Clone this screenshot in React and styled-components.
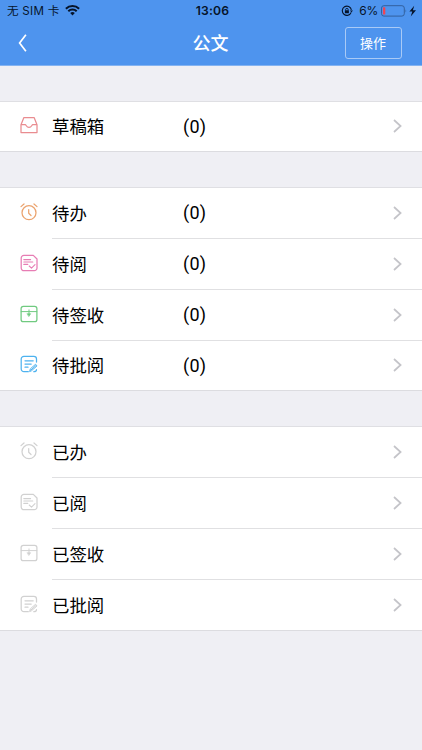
import React from "react";
import styled, { createGlobalStyle } from "styled-components";

const GlobalStyle = createGlobalStyle`
  * { box-sizing: border-box; }
  body {
    margin: 0;
    background: #efeff4;
    font-family: Inter, "Noto Sans CJK SC", sans-serif;
    color: #000;
  }
`;

const Screen = styled.div`
  height: 750px;
  overflow: hidden;
  background: #efeff4;
`;

const Header = styled.header`
  height: 66px;
  background: #4e94ee;
  border-bottom: 1px solid #84b3f1;
`;

const StatusBar = styled.div`
  display: grid;
  grid-template-columns: 1fr auto 1fr;
  height: 21px;
  align-items: center;
  padding: 1px 4px 0 7px;
  font-size: 11.6px;
  line-height: 20px;
  color: #06142a;
`;

const StatusSide = styled.div`
  display: flex;
  align-items: center;
  justify-content: ${(p) => (p.$end ? "flex-end" : "flex-start")};
  white-space: pre;
  svg { display: block; flex: none; }
`;

const Carrier = styled.span`
  margin-right: 6px;
  letter-spacing: 0.25px;
`;

const Clock = styled.span`
  font-size: 12.2px;
  font-weight: 600;
  letter-spacing: 0.15px;
`;

const Percent = styled.span`
  margin: 0 3px 0 6px;
  font-size: 12px;
  letter-spacing: -0.2px;
`;

const NavBar = styled.div`
  display: grid;
  grid-template-columns: 1fr auto 1fr;
  align-items: center;
  height: 44px;
  padding: 0 20px 0 18px;
  color: #fff;
`;

const BackButton = styled.button`
  justify-self: start;
  width: 12px;
  height: 20px;
  padding: 0;
  border: 0;
  background: none;
  color: inherit;
  svg { display: block; }
`;

const Title = styled.h1`
  margin: 0;
  padding: 0 0 2px 1px;
  font: 500 18px/26px "Noto Sans CJK SC", sans-serif;
`;

const ActionButton = styled.button`
  justify-self: end;
  width: 57px;
  height: 32px;
  padding: 0 1px 0 0;
  border: 1px solid #a9caf6;
  border-radius: 3px;
  background: none;
  color: #fff;
  font: 13px/28px "Noto Sans CJK SC", sans-serif;
`;

const Group = styled.section`
  margin-top: ${(p) => p.$gap}px;
  background: #fff;
  border-top: 1px solid #dfdfe3;
`;

const Row = styled.div`
  display: flex;
  align-items: center;
  height: ${(p) => p.$height || 51}px;
  padding-left: 20px;
  border-bottom: ${(p) => (p.$last ? "1px solid #dcdce0" : "0")};
`;

const IconSlot = styled.div`
  flex: none;
  width: 32px;
  padding-bottom: 3px;
  color: ${(p) => p.$color};
  svg { display: block; }
`;

const RowBody = styled.div`
  display: flex;
  flex: 1;
  align-items: center;
  height: 100%;
  padding-right: 20px;
  border-bottom: ${(p) => (p.$last ? "0" : "1px solid #e0e0e2")};
`;

const Label = styled.span`
  width: 131px;
  padding-bottom: 1px;
  font: 17.4px/26px "Noto Sans CJK SC", sans-serif;
`;

const Count = styled.span`
  font: 18px/26px Roboto, sans-serif;
  letter-spacing: 0.2px;
`;

const Chevron = styled.svg`
  display: block;
  margin: 0 0 1px auto;
`;

const Icon = ({ children }) => (
  <svg width="18" height="18" viewBox="0 0 18 18" fill="none" stroke="currentColor" strokeWidth="1.25" strokeLinecap="round" strokeLinejoin="round">
    {children}
  </svg>
);

const icons = {
  inbox: (
    <Icon>
      <path d="M1 8.7 3.9 1.5h10.2L17 8.7v7.8H1ZM1 8.7h4.3c.8 0 1.1 2.7 3.7 2.7s2.9-2.7 3.7-2.7H17" />
    </Icon>
  ),
  clock: (
    <Icon>
      <circle cx="9" cy="9.7" r="7" />
      <path d="M8.7 6.6v3.7l2.3 2.2M1 3.6 4 1M14 1l3 2.6" />
    </Icon>
  ),
  read: (
    <Icon>
      <path d="M4 1.4h9.3L17 5v9a2.7 2.7 0 0 1-2.7 2.7H4A2.7 2.7 0 0 1 1.2 14V4.1A2.7 2.7 0 0 1 4 1.4Z" />
      <path d="M3.8 5.6h6.8M3.8 8h9M3.8 10.4h4M9.2 12l2.3 2.1 3.5-3.4" strokeWidth="1.1" />
    </Icon>
  ),
  sign: (
    <Icon>
      <rect x="1.1" y="1.3" width="15.8" height="15.4" rx="2.3" />
      <path d="M1.2 6.6h15.6M9 4.9v5" strokeWidth="1" />
      <path d="M7.3 8.7h3.4L9 11.3Z" fill="currentColor" strokeWidth=".6" />
    </Icon>
  ),
  review: (
    <Icon>
      <path d="M16.5 7V4A2.7 2.7 0 0 0 13.8 1.3H3.9A2.7 2.7 0 0 0 1.2 4v10a2.7 2.7 0 0 0 2.7 2.7h4.4M5 5.8h8.2M5 9h6.2M5 12.2h3M13.8 16.7c1.5 0 2.6-.4 2.7-2" />
      <path d="m9.7 16.2.6-2.3 5.2-4.6 1.5 1.6-5.2 4.6ZM10.6 15.3l5.4-4.8" strokeWidth="1" />
    </Icon>
  ),
};

const WifiIcon = () => (
  <svg width="15" height="12" viewBox="0 0 15 12" fill="none" stroke="currentColor" strokeWidth="2">
    <path d="M.9 3.8a9.4 9.4 0 0 1 13.2 0M3.3 6.2a6 6 0 0 1 8.4 0" />
    <path d="M5.2 8.1a3.3 3.3 0 0 1 4.6 0L7.5 10.4Z" fill="currentColor" stroke="none" />
  </svg>
);

const RotationLockIcon = () => (
  <svg width="12" height="12" viewBox="0 0 12 12" fill="none" stroke="currentColor">
    <path d="M10.2 7.4a4.6 4.6 0 1 1 .2-2.6" strokeWidth="1.1" />
    <path d="M8.8 5.4h3.2L10.5 7.3Z" fill="currentColor" stroke="none" />
    <rect x="3.9" y="5.3" width="4" height="3" rx=".4" fill="currentColor" stroke="none" />
    <path d="M4.6 5.5v-.8a1.3 1.3 0 0 1 2.6 0v.8" strokeWidth=".9" />
  </svg>
);

const BatteryIcon = () => (
  <svg width="37" height="12" viewBox="0 0 37 12">
    <rect x=".5" y=".7" width="22.8" height="10.4" rx="2.4" fill="none" stroke="#2f5a94" strokeWidth=".9" />
    <rect x="1.9" y="2.2" width="2.4" height="7.4" rx=".6" fill="#ee4554" />
    <path d="M24.6 4.2q1.3 1.7 0 3.4Z" fill="#2f5a94" />
    <path d="m33.2 .8-4.8 5.7h2.9l-1.6 4.9 5.3-6.1h-3.1Z" fill="currentColor" />
  </svg>
);

const groups = [
  { gap: 35, rows: [{ icon: "inbox", color: "#e98c90", label: "草稿箱", count: 0, height: 50 }] },
  {
    gap: 35,
    rows: [
      { icon: "clock", color: "#eba36e", label: "待办", count: 0 },
      { icon: "read", color: "#e77db4", label: "待阅", count: 0 },
      { icon: "sign", color: "#70ca80", label: "待签收", count: 0 },
      { icon: "review", color: "#4db2ef", label: "待批阅", count: 0, height: 50 },
    ],
  },
  {
    gap: 35,
    rows: [
      { icon: "clock", color: "#d1d1d1", label: "已办" },
      { icon: "read", color: "#d1d1d1", label: "已阅" },
      { icon: "sign", color: "#d1d1d1", label: "已签收" },
      { icon: "review", color: "#d1d1d1", label: "已批阅" },
    ],
  },
];

export default function App() {
  return (
    <Screen>
      <GlobalStyle />
      <Header>
        <StatusBar>
          <StatusSide>
            <Carrier>无 SIM 卡</Carrier>
            <WifiIcon />
          </StatusSide>
          <Clock>13:06</Clock>
          <StatusSide $end>
            <RotationLockIcon />
            <Percent>6%</Percent>
            <BatteryIcon />
          </StatusSide>
        </StatusBar>
        <NavBar>
          <BackButton aria-label="返回">
            <svg width="12" height="20" viewBox="0 0 12 20" fill="none" stroke="currentColor" strokeWidth="1.7">
              <path d="M7.9 1.8 1.6 10l6.3 8.2" />
            </svg>
          </BackButton>
          <Title>公文</Title>
          <ActionButton>操作</ActionButton>
        </NavBar>
      </Header>
      {groups.map((group, g) => (
        <Group key={g} $gap={group.gap}>
          {group.rows.map((row, i) => {
            const last = i === group.rows.length - 1;
            return (
              <Row key={row.label} $height={row.height} $last={last}>
                <IconSlot $color={row.color}>{icons[row.icon]}</IconSlot>
                <RowBody $last={last}>
                  <Label>{row.label}</Label>
                  {row.count !== undefined && <Count>({row.count})</Count>}
                  <Chevron width="9" height="14" viewBox="0 0 9 14" fill="none" stroke="#c4c4c9" strokeWidth="1.7">
                    <path d="m1 1 6.6 6L1 13" />
                  </Chevron>
                </RowBody>
              </Row>
            );
          })}
        </Group>
      ))}
    </Screen>
  );
}
